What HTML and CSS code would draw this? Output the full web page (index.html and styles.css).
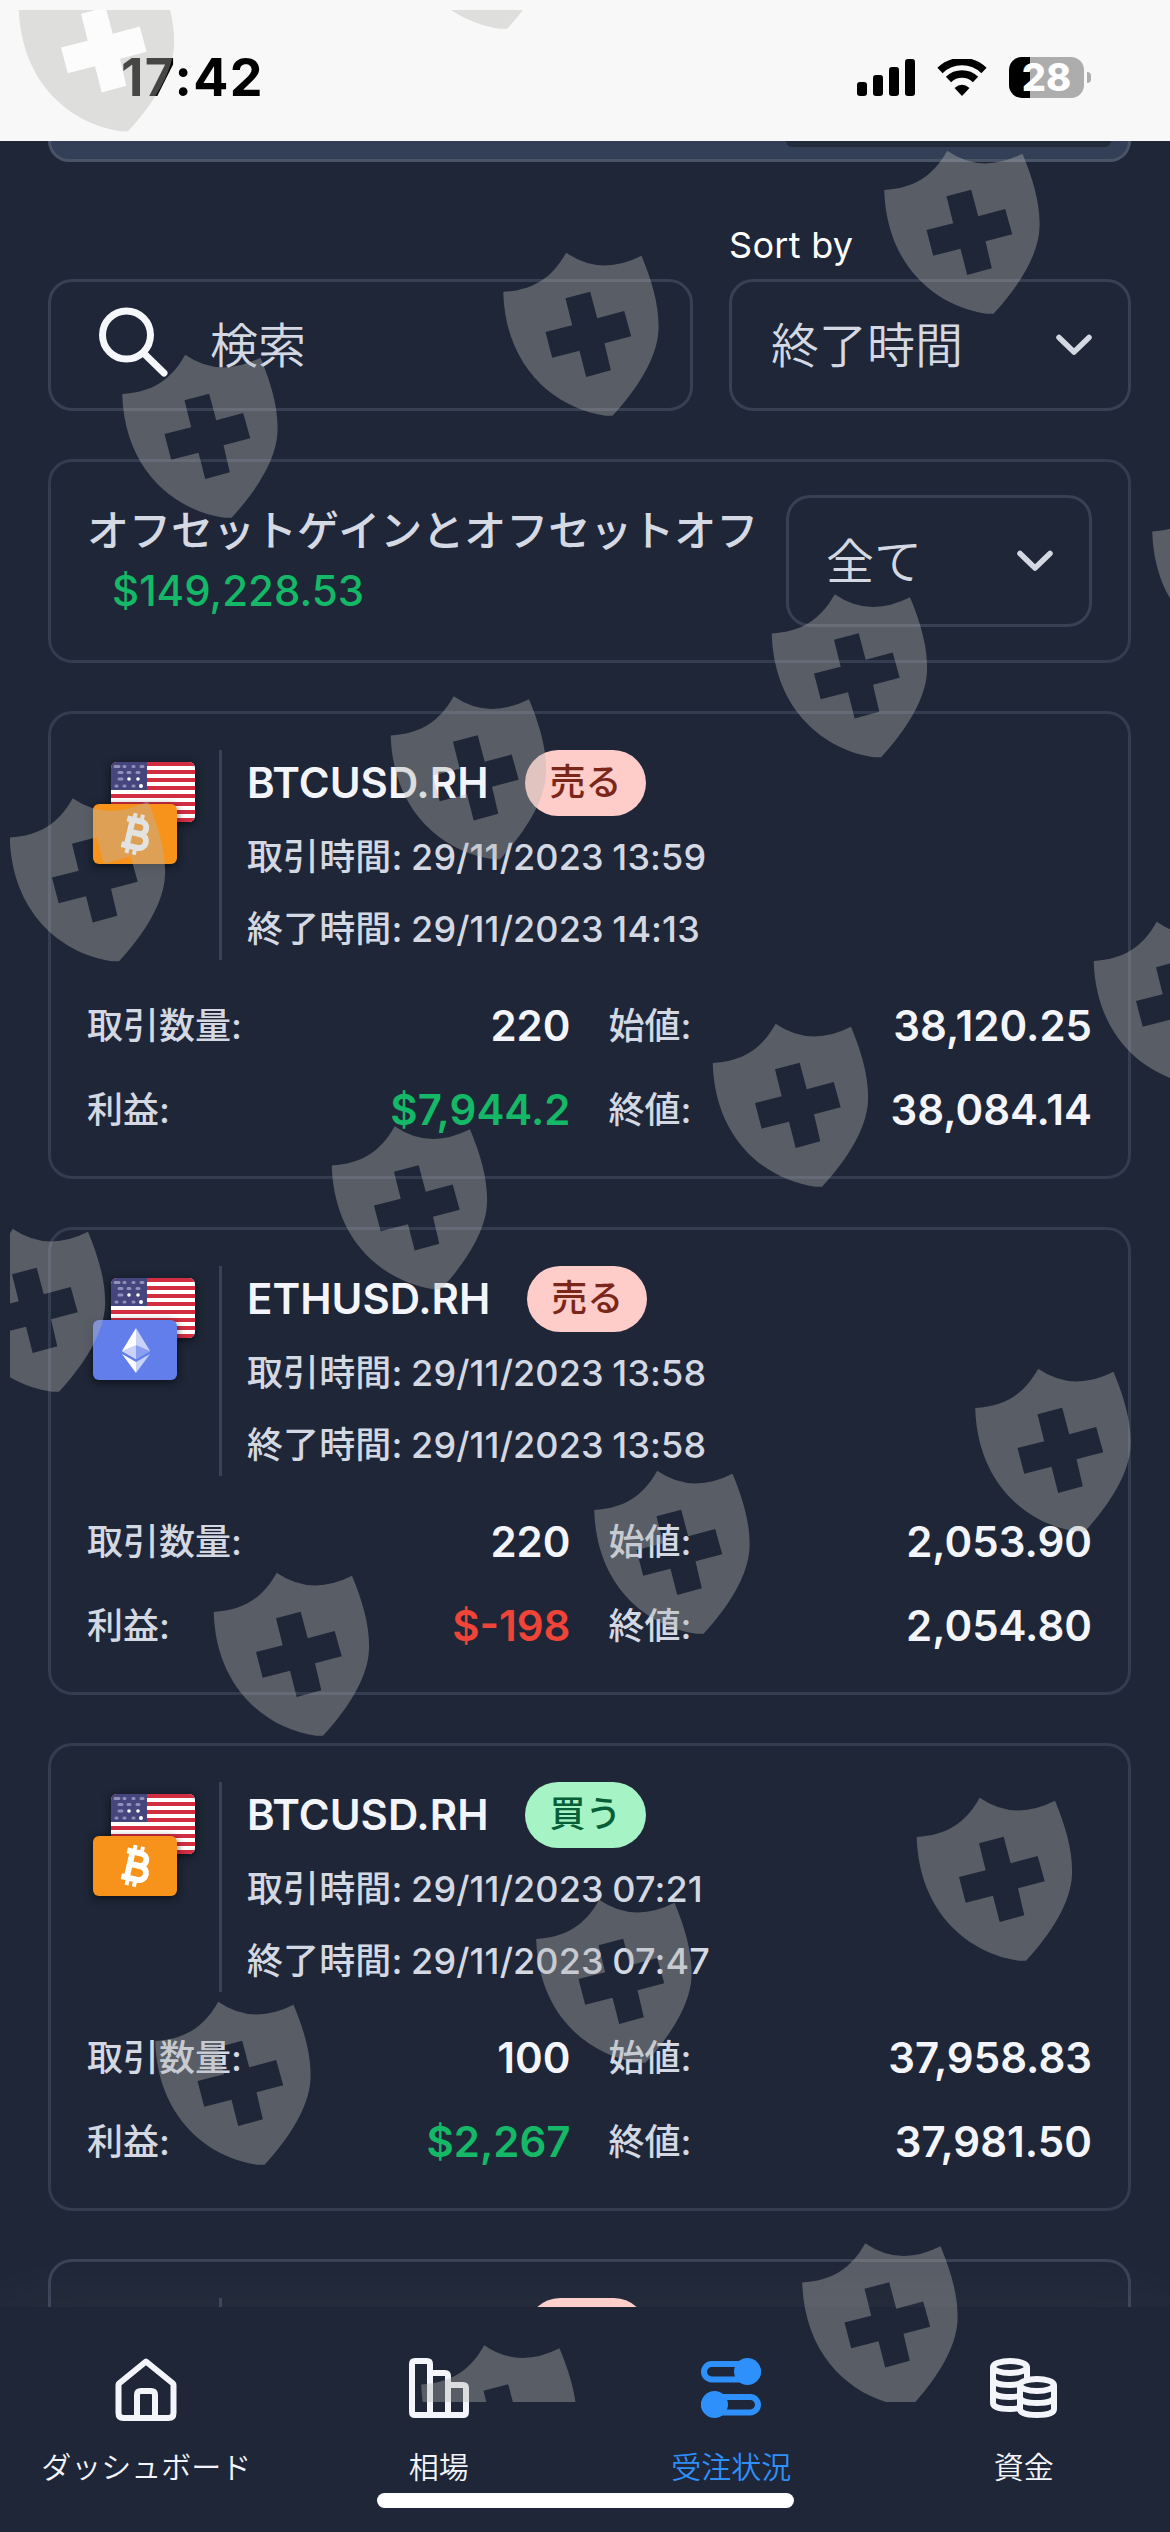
FILE: index.html
```html
<!DOCTYPE html>
<html lang="ja">
<head>
  <meta charset="UTF-8" />
  <meta name="viewport" content="width=device-width, initial-scale=1.0"/>
  <title>受注状況</title>
  <link rel="stylesheet" href="styles.css">
</head>
<body>
  <!-- shared icons -->
  <svg class="sprite" aria-hidden="true">
    <symbol id="chevron" viewBox="0 0 36 22">
      <path d="M3 3.5 18 18 33 3.5" fill="none" stroke="currentColor" stroke-width="5.5" stroke-linecap="round" stroke-linejoin="round"/>
    </symbol>
    <symbol id="flag-us" viewBox="0 0 84 60">
      <rect width="84" height="60" fill="#fff"/>
      <path d="M0 2h84M0 10h84M0 18h84M0 26h84M0 34h84M0 42h84M0 50h84M0 58h84" stroke="#d32d42" stroke-width="4"/>
      <rect width="36" height="28" fill="#46467f"/>
      <g fill="none" stroke="#a9a9cc" stroke-width="3" stroke-linecap="round">
        <path d="M4 4.5h4M13 4.5h1M22 4.5h1M30 4.5h2M8 10.5h3M17 10.5h2M26 10.5h2M8 17h3M5 24h1M13 24h1M22 24h1" stroke-opacity=".75"/>
      </g>
      <g fill="#fff"><circle cx="18" cy="17" r="1.8"/><circle cx="27" cy="17" r="1.8"/><circle cx="30" cy="24" r="2"/></g>
    </symbol>
    <symbol id="coin-btc" viewBox="0 0 84 60">
      <rect width="84" height="60" fill="#f7931a"/>
      <g transform="rotate(13 42 30)" fill="none" stroke="#fff">
        <path d="M31 16.5h14.5a6 6 0 0 1 0 12.5h-9.5M36 29h11.500a7 7 0 0 1 0 14h-16.500M36.500 16.500v26.500" stroke-width="6"/>
        <path d="M38 9.500v6M45.500 9.500v6M38 44v6.500M45.500 44v6.500" stroke-width="4"/>
      </g>
    </symbol>
    <symbol id="coin-eth" viewBox="0 0 84 60">
      <rect width="84" height="60" fill="#627eea"/>
      <path d="M43 8 29 31l14 8z" fill="#fff"/>
      <path d="M43 8v31l14-8z" fill="#c9d2f8"/>
      <path d="M43 25 29 31l14 8z" fill="#c9d2f8"/>
      <path d="M43 25v14l14-8z" fill="#8b9ff0"/>
      <path d="M29 34l14 8v11z" fill="#fff"/>
      <path d="M57 34l-14 8v11z" fill="#c9d2f8"/>
    </symbol>
    <symbol id="shield" viewBox="0 0 157 165">
      <path fill-rule="evenodd" d="M.7 40C30 38 49 27 63.7.7Q98 24.5 139 3.7C150 30 157 55 156 78C155 105 135 137 110 163.7L103 163.7C55 157 3 118 .7 40zM63 46.3 69.7 73.3 43 80 49.7 105.7 77 98.7 83.7 125 108.3 118.3 102 91.3 128.7 84.3 121.7 59 94.7 66.3 87.7 39.7z"/>
    </symbol>
  </svg>

  <div class="status-bar">
    <div class="time">17:42</div>
    <div class="status-icons">
      <svg width="58" height="38" viewBox="0 0 58 38">
        <rect x="0" y="23" width="10" height="14" rx="3"/>
        <rect x="16" y="16" width="10" height="21" rx="3"/>
        <rect x="32" y="8" width="10" height="29" rx="3"/>
        <rect x="48" y="0" width="10" height="37" rx="3"/>
      </svg>
      <svg width="50" height="38" viewBox="0 0 50 38">
        <path d="M3 11.5a31.5 31.5 0 0 1 44 0M11.5 20.5a19.5 19.5 0 0 1 27 0" fill="none" stroke="#000" stroke-width="7.5"/>
        <path d="M25 37 17.5 29q7.5-6.5 15 0z"/>
      </svg>
      <div class="battery"><span>28</span></div>
    </div>
  </div>

  <main class="page">
    <div class="balance-card"><div class="balance-box"></div></div>

    <div class="toolbar">
      <div class="search field">
        <svg width="70" height="70" viewBox="0 0 70 70">
          <circle cx="27.5" cy="28" r="24" fill="none" stroke="#f5f7fb" stroke-width="7"/>
          <path d="M45.5 47 65 66" stroke="#f5f7fb" stroke-width="7" stroke-linecap="round"/>
        </svg>
        <span>検索</span>
      </div>
      <div class="sort">
        <div class="sort-label">Sort by</div>
        <div class="select field">
          <span>終了時間</span>
          <svg width="36" height="22"><use href="#chevron"/></svg>
        </div>
      </div>
    </div>

    <section class="summary">
      <div class="summary-text">
        <div class="summary-title">オフセットゲインとオフセットオフ</div>
        <div class="summary-amount">$149,228.53</div>
      </div>
      <div class="select field">
        <span>全て</span>
        <svg width="36" height="22"><use href="#chevron"/></svg>
      </div>
    </section>

    <article class="order">
      <div class="order-head">
        <div class="pair">
          <svg class="quote" width="84" height="60"><use href="#flag-us"/></svg>
          <svg class="base" width="84" height="60"><use href="#coin-btc"/></svg>
        </div>
        <div class="info">
          <div class="title"><h2>BTCUSD.RH</h2><span class="pill sell">売る</span></div>
          <p>取引時間: 29/11/2023 13:59</p>
          <p>終了時間: 29/11/2023 14:13</p>
        </div>
      </div>
      <dl class="figures">
        <div><dt>取引数量:</dt><dd>220</dd></div>
        <div><dt>始値:</dt><dd>38,120.25</dd></div>
        <div><dt>利益:</dt><dd class="gain">$7,944.2</dd></div>
        <div><dt>終値:</dt><dd>38,084.14</dd></div>
      </dl>
    </article>

    <article class="order">
      <div class="order-head">
        <div class="pair">
          <svg class="quote" width="84" height="60"><use href="#flag-us"/></svg>
          <svg class="base" width="84" height="60"><use href="#coin-eth"/></svg>
        </div>
        <div class="info">
          <div class="title"><h2>ETHUSD.RH</h2><span class="pill sell">売る</span></div>
          <p>取引時間: 29/11/2023 13:58</p>
          <p>終了時間: 29/11/2023 13:58</p>
        </div>
      </div>
      <dl class="figures">
        <div><dt>取引数量:</dt><dd>220</dd></div>
        <div><dt>始値:</dt><dd>2,053.90</dd></div>
        <div><dt>利益:</dt><dd class="loss">$-198</dd></div>
        <div><dt>終値:</dt><dd>2,054.80</dd></div>
      </dl>
    </article>

    <article class="order">
      <div class="order-head">
        <div class="pair">
          <svg class="quote" width="84" height="60"><use href="#flag-us"/></svg>
          <svg class="base" width="84" height="60"><use href="#coin-btc"/></svg>
        </div>
        <div class="info">
          <div class="title"><h2>BTCUSD.RH</h2><span class="pill buy">買う</span></div>
          <p>取引時間: 29/11/2023 07:21</p>
          <p>終了時間: 29/11/2023 07:47</p>
        </div>
      </div>
      <dl class="figures">
        <div><dt>取引数量:</dt><dd>100</dd></div>
        <div><dt>始値:</dt><dd>37,958.83</dd></div>
        <div><dt>利益:</dt><dd class="gain">$2,267</dd></div>
        <div><dt>終値:</dt><dd>37,981.50</dd></div>
      </dl>
    </article>

    <!-- next order, scrolled under the tab bar -->
    <article class="order next">
      <div class="order-head">
        <div class="pair"></div>
        <div class="info"><div class="title"><span class="pill sell"></span></div></div>
      </div>
    </article>
  </main>

  <nav class="tabs">
    <a class="tab">
      <svg width="62" height="64" viewBox="0 0 62 64">
        <path d="M31 3.5 4 25.5Q3.5 26 3.5 27v28q0 5 5 5h45q5 0 5-5V27q0-1-.5-1.5zM22 60V37q0-4 4-4h10q4 0 4 4v23"/>
      </svg>
      <span>ダッシュボード</span>
    </a>
    <a class="tab">
      <svg width="60" height="64" viewBox="0 0 60 64">
        <path d="M21 57H6q-3 0-3-3V6q0-3 3-3h12q3 0 3 3zM21 15h15q3 0 3 3v39H21M39 27h15q3 0 3 3v24q0 3-3 3H39"/>
      </svg>
      <span>相場</span>
    </a>
    <a class="tab active">
      <svg width="60" height="64" viewBox="0 0 60 64">
        <rect x="3" y="6" width="54" height="15.5" rx="7.7"/>
        <rect x="3" y="39" width="54" height="15.5" rx="7.7"/>
        <circle class="knob" cx="46.5" cy="13.5" r="13.5"/>
        <circle class="knob" cx="13.5" cy="46.5" r="13.5"/>
      </svg>
      <span>受注状況</span>
    </a>
    <a class="tab">
      <svg width="67" height="64" viewBox="0 0 67 64">
        <ellipse cx="20" cy="9" rx="17" ry="6"/>
        <path d="M3 9v36c0 4 7 6 17 6 4 0 7-.5 9-1M37 9v12M3 21c0 4 7 6 17 6 4 0 8-.5 11-2M3 33c0 4 7 6 17 6 4 0 6-.3 9-1"/>
        <ellipse cx="47" cy="27" rx="17" ry="6"/>
        <path d="M30 27v24c0 4 7 6 17 6s17-2 17-6V27M30 39c0 4 7 6 17 6s17-2 17-6"/>
      </svg>
      <span>資金</span>
    </a>
    <div class="home-indicator"></div>
  </nav>

  <!-- shield pattern laid over the whole screen -->
  <svg class="watermark" width="1160" height="2392" viewBox="10 10 1160 2392">
    <path d="M81 13.8 105.7 7.2 112.7 33.8 139.7 26.5 146.7 51.8 120 58.8 126.3 85.8 101.7 92.5 95 66.2 67.7 73.2 61 47.5 87.7 40.8z" fill="#fff" fill-opacity=".6"/>
    <g class="shields">
      <use href="#shield" x="18" y="-32.5" width="157" height="165"/>
      <use href="#shield" x="397" y="-135" width="157" height="165"/>
      <use href="#shield" x="883.5" y="150" width="157" height="165"/>
      <use href="#shield" x="502.5" y="252" width="157" height="165"/>
      <use href="#shield" x="121.5" y="354" width="157" height="165"/>
      <use href="#shield" x="1151.5" y="491.5" width="157" height="165"/>
      <use href="#shield" x="771" y="593.5" width="157" height="165"/>
      <use href="#shield" x="390" y="695.5" width="157" height="165"/>
      <use href="#shield" x="9" y="797.5" width="157" height="165"/>
      <use href="#shield" x="1093" y="921" width="157" height="165"/>
      <use href="#shield" x="712" y="1023" width="157" height="165"/>
      <use href="#shield" x="331" y="1125.5" width="157" height="165"/>
      <use href="#shield" x="-51" y="1228" width="157" height="165"/>
      <use href="#shield" x="974.5" y="1368" width="157" height="165"/>
      <use href="#shield" x="593.5" y="1470" width="157" height="165"/>
      <use href="#shield" x="213" y="1572" width="157" height="165"/>
      <use href="#shield" x="916" y="1797" width="157" height="165"/>
      <use href="#shield" x="535.5" y="1899" width="157" height="165"/>
      <use href="#shield" x="154.5" y="2001" width="157" height="165"/>
      <use href="#shield" x="801.5" y="2242.5" width="157" height="165"/>
      <use href="#shield" x="420.5" y="2344.5" width="157" height="165"/>
    </g>
  </svg>
</body>
</html>
```

FILE: styles.css
```css
* {
  box-sizing: border-box;
}

body {
  margin: 0;
  position: relative;
  width: 1170px;
  height: 2532px;
  overflow: hidden;
  display: flex;
  flex-direction: column;
  background: #1e2637;
  color: #f3f5fa;
  font-family: Inter, "Noto Sans CJK JP", sans-serif;
  font-size: 36px;
}

h2, p, dl, dd {
  margin: 0;
}

svg {
  display: block;
  flex: none;
}

.sprite {
  position: absolute;
  width: 0;
  height: 0;
}

/* status bar */
.status-bar {
  flex: none;
  height: 141px;
  padding: 14px 79px 0 121px;
  display: flex;
  justify-content: space-between;
  align-items: center;
  background: #f8f8f8;
  color: #000;
}

.time {
  font-size: 52px;
  font-weight: 700;
  letter-spacing: 1.3px;
}

.status-icons {
  display: flex;
  align-items: center;
  gap: 22px;
}

.battery {
  position: relative;
  width: 75px;
  height: 41px;
  margin-right: 7px;
  border-radius: 13px;
  background: linear-gradient(to right, #000 21px, #adadad 21px);
  color: #fff;
  font-size: 38px;
  font-weight: 800;
  line-height: 41px;
  text-align: center;
}

.battery::after {
  content: "";
  position: absolute;
  left: 78px;
  top: 15px;
  width: 4px;
  height: 11px;
  border-radius: 0 5px 5px 0;
  background: #adadad;
}

/* content */
.page {
  flex: 1;
  min-height: 0;
  overflow: hidden;
  padding: 0 39px 0 48px;
  display: flex;
  flex-direction: column;
}

.balance-card {
  flex: none;
  height: 21px;
  padding-right: 17px;
  border: 3px solid #4a5467;
  border-top: 0;
  border-radius: 0 0 24px 24px;
  background: #333f57;
}

.balance-box {
  width: 325px;
  height: 6px;
  margin-left: auto;
  border-radius: 0 0 20px 20px;
  background: #222b3c;
}

.toolbar {
  margin-top: 56px;
  display: flex;
  align-items: flex-end;
  gap: 36px;
}

.field {
  height: 132px;
  border: 3px solid #384154;
  border-radius: 24px;
  display: flex;
  align-items: center;
  color: #d3d8e3;
  font-size: 48px;
  font-weight: 350;
}

.field span {
  margin-top: -6px;
}

.search {
  width: 645px;
  padding-left: 48px;
  gap: 41px;
}

.search svg {
  margin-top: -7px;
}

.sort {
  width: 402px;
}

.sort-label {
  margin-bottom: 7px;
  line-height: 54px;
  color: #fff;
  font-weight: 400;
  letter-spacing: 0.3px;
}

.select {
  justify-content: space-between;
  padding: 0 36px 0 39px;
}

.summary {
  flex: none;
  height: 204px;
  margin-top: 48px;
  padding: 33px 36px;
  border: 3px solid #343d50;
  border-radius: 24px;
  display: flex;
  justify-content: space-between;
}

.summary .select {
  width: 306px;
  padding-left: 37px;
}

.summary-text {
  padding-top: 6px;
  font-size: 42px;
  font-weight: 500;
  line-height: 60px;
  white-space: nowrap;
}

.summary-title {
  color: #d5d9e4;
}

.summary-amount {
  padding-left: 25px;
  color: #14b866;
}

/* order cards */
.order {
  flex: none;
  height: 468px;
  margin-top: 48px;
  padding: 36px;
  border: 3px solid #343d50;
  border-radius: 24px;
}

.order.next {
  border-color: #3a4255;
}

.order-head {
  height: 210px;
  display: flex;
}

.pair {
  position: relative;
  width: 132px;
}

.pair svg {
  position: absolute;
  border-radius: 6px;
  box-shadow: 0 2px 8px rgba(0, 0, 0, 0.6);
}

.quote {
  left: 24px;
  top: 12px;
}

.base {
  left: 6px;
  top: 54px;
}

.info {
  padding-left: 25px;
  border-left: 3px solid #3a4356;
  color: #d3d8e3;
  line-height: 48px;
}

.info p {
  font-weight: 500;
  letter-spacing: 0.1px;
  word-spacing: -1px;
}

.info p:first-of-type {
  margin: 17px 0 24px;
}

.title {
  height: 66px;
  display: flex;
  align-items: center;
  gap: 37px;
}

.title h2 {
  color: #f3f5fa;
  font-size: 42px;
  font-weight: 600;
}

.pill {
  height: 66px;
  padding: 0 24px;
  border-radius: 33px;
  font-weight: 500;
  line-height: 64px;
}

.sell {
  background: #fecdca;
  color: #7a271a;
}

.buy {
  background: #a6f4c5;
  color: #065f37;
}

.next .pill {
  width: 120px;
  margin-left: 280px;
}

.figures {
  margin-top: 42px;
  display: grid;
  grid-template-columns: 1fr 1fr;
  gap: 36px 38px;
  line-height: 48px;
}

.figures div {
  height: 48px;
  display: flex;
  justify-content: space-between;
  align-items: center;
}

.figures dt {
  color: #d3d8e3;
  font-weight: 500;
}

.figures dd {
  font-size: 42px;
  font-weight: 600;
}

.figures .gain {
  color: #14b866;
}

.figures .loss {
  color: #f04438;
}

/* bottom tabs */
.tabs {
  position: relative;
  flex: none;
  height: 225px;
  padding-top: 51px;
  display: grid;
  grid-template-columns: repeat(4, 1fr);
  background: #1e2637;
  box-shadow: 0 0 72px rgba(255, 255, 255, 0.06);
}

.tab {
  display: flex;
  flex-direction: column;
  align-items: center;
  color: #f3f5fa;
  font-size: 30px;
  font-weight: 350;
  line-height: 44px;
}

.tab svg {
  margin-bottom: 23px;
  fill: none;
  stroke: currentColor;
  stroke-width: 6;
  stroke-linejoin: round;
}

.tab .knob {
  fill: currentColor;
  stroke: none;
}

.tab.active {
  color: #2e90fa;
}

.home-indicator {
  position: absolute;
  left: 377px;
  bottom: 24px;
  width: 417px;
  height: 15px;
  border-radius: 8px;
  background: #fff;
}

.watermark {
  position: absolute;
  left: 10px;
  top: 10px;
  overflow: hidden;
}

.shields {
  fill: rgb(180, 180, 177);
  fill-opacity: 0.39;
}
```
